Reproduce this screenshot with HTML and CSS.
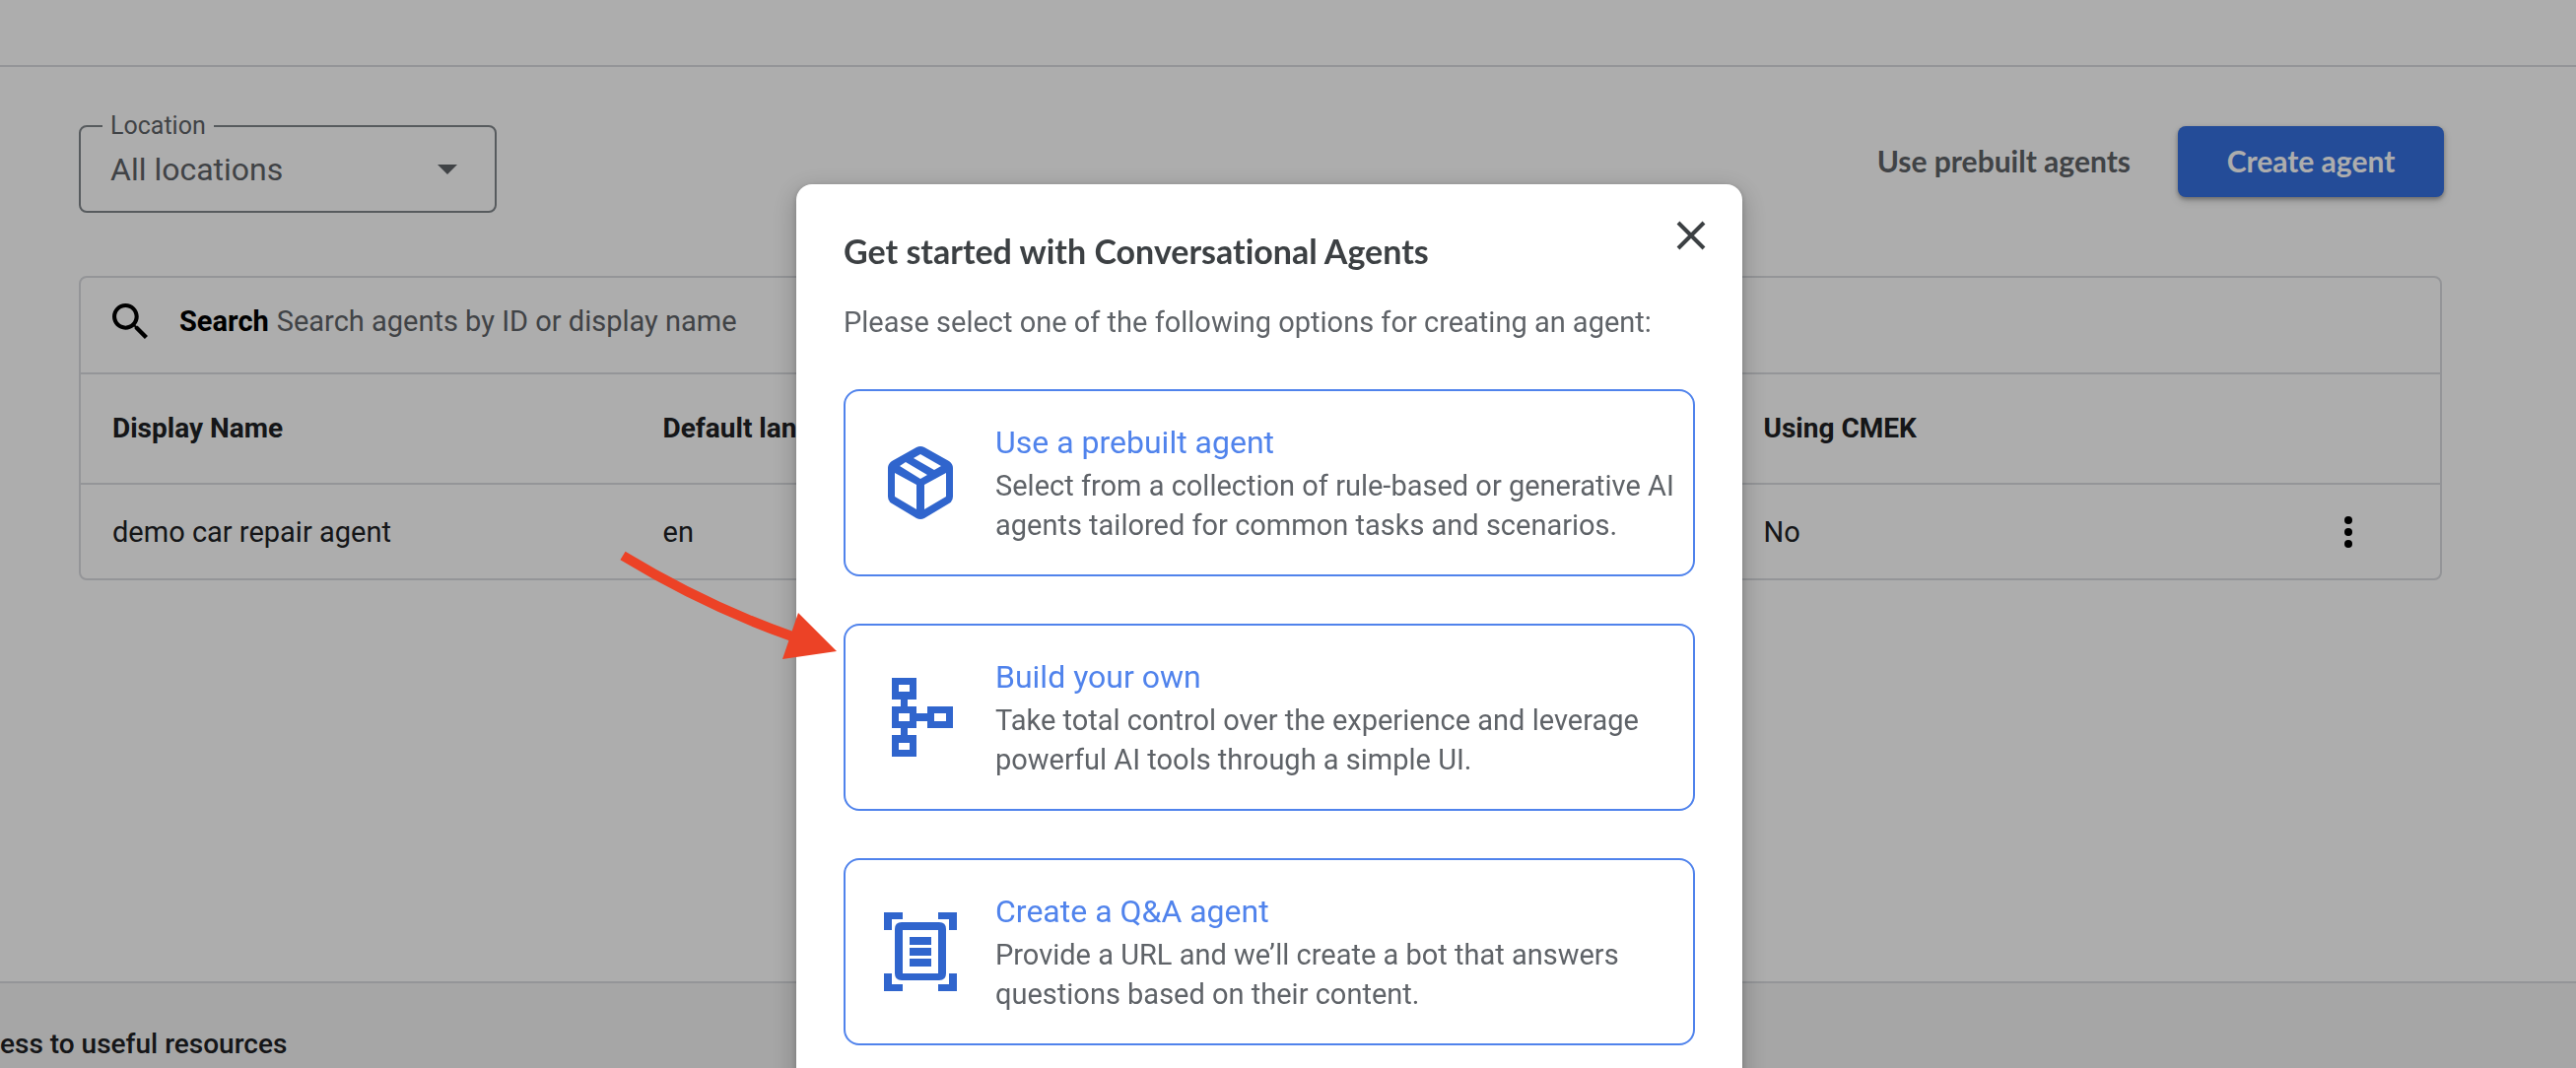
FILE: index.html
```html
<!DOCTYPE html>
<html lang="en">
<head>
<meta charset="utf-8">
<title>Conversational Agents</title>
<link rel="stylesheet" href="styles.css">
</head>
<body>
<div class="page">
  <header class="topbar"></header>
  <main class="content">
    <div class="toolbar">
      <fieldset class="location">
        <legend><label for="location">Location</label></legend>
        <div class="location-row">
          <select id="location"><option>All locations</option></select>
          <svg class="caret" viewBox="0 0 20 10" aria-hidden="true"><path d="M0 0h20L10 10z"/></svg>
        </div>
      </fieldset>
      <div class="actions">
        <button class="btn btn-text" type="button">Use prebuilt agents</button>
        <button class="btn btn-primary" type="button">Create agent</button>
      </div>
    </div>
    <section class="agents">
      <div class="search">
        <svg class="search-icon" viewBox="3 3 17.5 17.5" aria-hidden="true"><path d="M15.5 14h-.79l-.28-.27C15.41 12.59 16 11.11 16 9.5 16 5.91 13.09 3 9.5 3S3 5.91 3 9.5 5.91 16 9.5 16c1.61 0 3.09-.59 4.23-1.57l.27.28v.79l5 4.99L20.49 19l-4.99-5zm-6 0C7.01 14 5 11.99 5 9.5S7.01 5 9.5 5 14 7.01 14 9.5 11.99 14 9.5 14z"/></svg>
        <label for="search">Search</label>
        <input id="search" type="text" placeholder="Search agents by ID or display name">
      </div>
      <table>
        <thead>
          <tr><th>Display Name</th><th>Default language</th><th></th><th>Using CMEK</th><th class="menu-cell"></th></tr>
        </thead>
        <tbody>
          <tr>
            <td>demo car repair agent</td><td>en</td><td></td><td>No</td>
            <td class="menu-cell"><button class="icon-btn" type="button" aria-label="More options"><svg viewBox="0 0 48 48"><circle cx="24" cy="12" r="4"/><circle cx="24" cy="24" r="4"/><circle cx="24" cy="36" r="4"/></svg></button></td>
          </tr>
        </tbody>
      </table>
    </section>
  </main>
  <footer class="resources">ess to useful resources</footer>
</div>

<div class="overlay">
  <div class="dialog" role="dialog" aria-labelledby="dialog-title">
    <button class="icon-btn close" type="button" aria-label="Close"><svg viewBox="0 0 48 48"><path d="M11 11l26 26M37 11L11 37"/></svg></button>
    <h1 id="dialog-title">Get started with Conversational Agents</h1>
    <p class="intro">Please select one of the following options for creating an agent:</p>
    <div class="options">
      <button class="option" type="button">
        <svg class="option-icon" viewBox="0 0 80 88" aria-hidden="true"><path fill-rule="evenodd" d="M36 8Q40 6 44 8L69 22Q73 25 73 29V58Q73 63 69 65L44 80Q40 82 36 80L11 65Q7 63 7 58V29Q7 25 11 22ZM14 34V58L36 71V46ZM66 34L44 46V71L66 58ZM19 27L40 40L47 36L25 23ZM33 19L54 31L61 27L40 15Z"/></svg>
        <span class="option-text"><span class="option-title">Use a prebuilt agent</span><span class="option-desc">Select from a collection of rule-based or generative AI agents tailored for common tasks and scenarios.</span></span>
      </button>
      <button class="option" type="button">
        <svg class="option-icon" viewBox="0 0 80 88" aria-hidden="true"><path fill-rule="evenodd" d="M11 4H36V26H27V33H36V40H47V33H73V55H47V48H36V55H27V62H36V84H11V62H20V55H11V33H20V26H11ZM18 11V18H29V11ZM18 40V48H29V40ZM54 40V48H66V40ZM18 70V77H29V70Z"/></svg>
        <span class="option-text"><span class="option-title">Build your own</span><span class="option-desc">Take total control over the experience and leverage powerful AI tools through a simple UI.</span></span>
      </button>
      <button class="option" type="button">
        <svg class="option-icon" viewBox="0 0 80 88" aria-hidden="true"><path d="M3 4H22V11H11V22H3ZM58 4H77V22H69V11H58ZM3 66H11V77H22V84H3ZM69 66H77V84H58V77H69ZM29 29H51V37H29ZM29 40H51V48H29ZM29 51H51V59H29Z"/><path fill-rule="evenodd" d="M21 14H59Q66 14 66 21V66Q66 73 59 73H21Q14 73 14 66V21Q14 14 21 14ZM22 22V66H58V22Z"/></svg>
        <span class="option-text"><span class="option-title">Create a Q&amp;A agent</span><span class="option-desc">Provide a URL and we’ll create a bot that answers questions based on their content.</span></span>
      </button>
    </div>
    <svg class="arrow" viewBox="0 0 220 110" aria-hidden="true"><path class="shaft" d="M2 7Q86 58 174 89"/><path d="M180 65L219 104L164 112Z"/></svg>
  </div>
</div>
</body>
</html>
```
FILE: styles.css
```css
* { box-sizing: border-box; }

body {
  margin: 0;
  font-family: Roboto, "Liberation Sans", sans-serif;
  font-size: 29px;
  line-height: 40px;
  color: #202124;
  background: #fff;
}

button, input, select { font: inherit; color: inherit; }
button { cursor: pointer; }

.page {
  display: flex;
  flex-direction: column;
  min-height: 100vh;
}

.topbar { height: 68px; border-bottom: 2px solid #dadce0; }

.content { flex: 1; padding: 44px 134px 0 80px; }

.toolbar {
  display: flex;
  justify-content: space-between;
  align-items: flex-start;
}

.location {
  width: 424px;
  height: 104px;
  margin: 0;
  padding: 0 38px 0 22px;
  border: 2px solid #80868b;
  border-radius: 8px;
  color: #5f6368;
}

.location legend {
  padding: 0 8px;
  font-size: 25px;
  line-height: 32px;
}

.location-row { display: flex; align-items: center; padding-left: 8px; }

.location select {
  flex: 1;
  padding: 0;
  border: 0;
  appearance: none;
  background: none;
  font-size: 32px;
  line-height: 56px;
}

.caret { width: 20px; height: 10px; fill: #5f6368; }

.actions { display: flex; gap: 24px; padding-top: 16px; }

.btn {
  height: 72px;
  padding: 0 24px 2px;
  border: 0;
  border-radius: 8px;
  background: none;
  font-family: Lato, sans-serif;
  font-size: 30px;
  font-weight: 700;
}

.btn-text { color: #5f6368; }

.btn-primary {
  width: 270px;
  background: #3671e0;
  color: #fff;
  box-shadow: 0 2px 4px rgba(0, 0, 0, .3), 0 4px 8px rgba(0, 0, 0, .15);
}

.agents {
  margin: 64px 2px 0 0;
  border: 2px solid #dadce0;
  border-radius: 8px;
}

.search {
  display: flex;
  align-items: center;
  height: 96px;
  padding: 0 32px 8px;
}

.search-icon { width: 36px; height: 36px; margin-right: 32px; fill: #000; }
.search label { font-weight: 700; color: #000; }

.search input {
  flex: 1;
  margin-left: 8px;
  padding: 0;
  border: 0;
  background: none;
}

.search input::placeholder { color: #5f6368; opacity: 1; }

table { width: 100%; table-layout: fixed; border-collapse: collapse; }
th, td { padding: 0 32px; border-top: 2px solid #dadce0; text-align: left; }
th { height: 112px; font-size: 28px; font-weight: 700; }
td { height: 96px; }
.menu-cell { width: 160px; padding: 0 43px; }

.icon-btn {
  display: block;
  width: 48px;
  height: 48px;
  padding: 0;
  border: 0;
  background: none;
}

.icon-btn svg { display: block; width: 48px; height: 48px; }

.resources {
  height: 88px;
  padding-top: 42px;
  border-top: 2px solid #dadce0;
  background: #f5f5f5;
  font-size: 28px;
  font-weight: 500;
}

.overlay {
  position: fixed;
  inset: 0;
  display: flex;
  justify-content: center;
  align-items: flex-start;
  overflow: hidden;
  padding: 187px 38px 0 0;
  background: rgba(0, 0, 0, .32);
}

.dialog {
  position: relative;
  width: 960px;
  padding: 48px;
  border-radius: 16px;
  background: #fff;
  box-shadow: 0 2px 6px rgba(0, 0, 0, .2), 0 8px 24px 4px rgba(0, 0, 0, .18);
}

.close { position: absolute; top: 28px; right: 28px; }
.close path { fill: none; stroke: #3c4043; stroke-width: 4; }

.dialog h1 {
  margin: 0;
  font-family: Lato, sans-serif;
  font-size: 34px;
  font-variant-ligatures: none;
  font-weight: 700;
  line-height: 40px;
  color: #3c4043;
}

.intro { margin: 32px 0 48px; color: #5f6368; }

.options { display: flex; flex-direction: column; gap: 48px; }

.option {
  display: flex;
  align-items: center;
  height: 190px;
  padding: 0 16px 0 36px;
  border: 2px solid #5083ec;
  border-radius: 16px;
  background: #fff;
  text-align: left;
}

.option-icon { flex: none; width: 80px; height: 88px; margin-right: 36px; fill: #3065cd; }
.option-text { flex: 1; }
.option-title, .option-desc { display: block; }
.option-title { margin-bottom: 2px; font-size: 32px; line-height: 44px; color: #5083ec; }
.option-desc { color: #5f6368; }

.arrow {
  position: absolute;
  left: -178px;
  top: 370px;
  width: 220px;
  height: 110px;
  overflow: visible;
  fill: #ec4226;
}

.arrow .shaft { fill: none; stroke: #ec4226; stroke-width: 10; }
```
